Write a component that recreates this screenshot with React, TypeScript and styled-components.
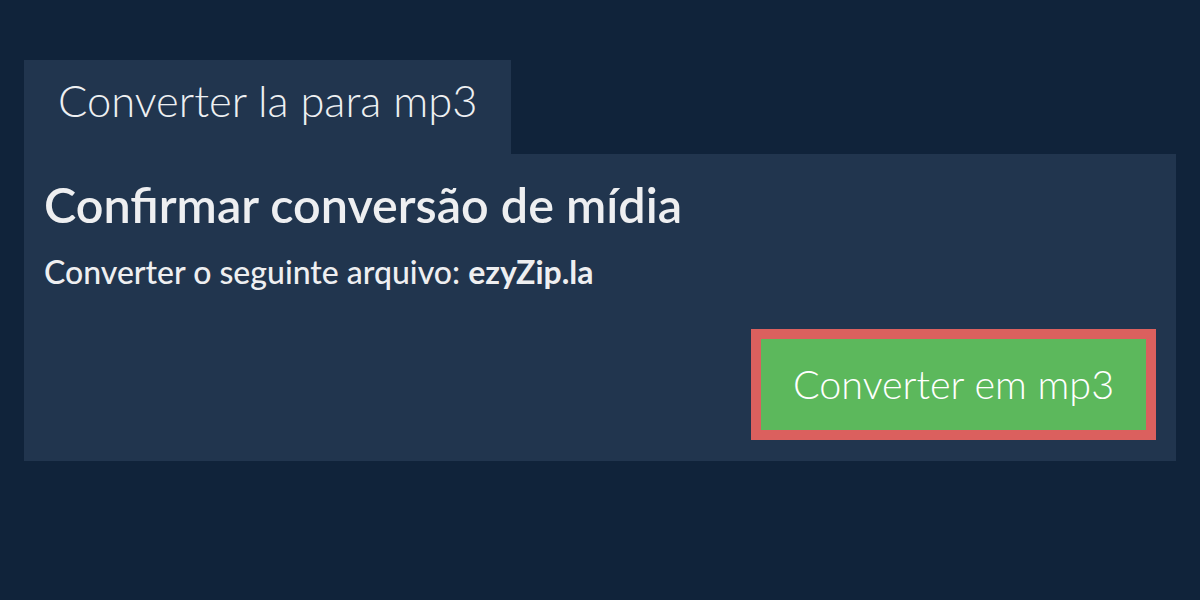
import React from "react"
import styled, { createGlobalStyle } from "styled-components"

const GlobalStyle = createGlobalStyle`
    html, body {
        margin: 0;
        padding: 0;
        background-color: #10233a;
        font-family: Lato, "Open Sans", sans-serif;
    }
`
const Page = styled.div`
    width: 1200px;
    height: 600px;
    padding: 60px 24px 0 24px;
    box-sizing: border-box;
    display: flex;
    flex-direction: column;
    align-items: flex-start;
`
const Tab = styled.div`
    height: 94px;
    box-sizing: border-box;
    padding: 14px 34px 0 34px;
    background-color: #21354e;
    color: #eef0f2;
    font-size: 43.5px;
    font-weight: 300;
    line-height: 1.2;
`
const Panel = styled.div`
    align-self: stretch;
    background-color: #21354e;
    padding: 21px 20px 21px 20px;
    display: flex;
    flex-direction: column;
`
const Title = styled.h1`
    margin: 0;
    font-size: 48.5px;
    font-weight: 600;
    line-height: 1.2;
    color: #eeeff1;
`
const FileLine = styled.p`
    margin: 20px 0 0 0;
    font-size: 32px;
    font-weight: 500;
    line-height: 1.2;
    color: #eeeff1;
    b {
        font-weight: 700;
    }
`
const Actions = styled.div`
    display: flex;
    justify-content: flex-end;
    margin-top: 37px;
`
const ConvertButton = styled.button`
    width: 405px;
    height: 111px;
    box-sizing: border-box;
    padding: 0;
    border: 10px solid #db605e;
    background-color: #5cb85c;
    color: #ffffff;
    font-family: Lato, "Open Sans", sans-serif;
    font-size: 39.5px;
    font-weight: 300;
    line-height: 1.2;
    cursor: pointer;
`

export default function App() {
    return (
        <>
            <GlobalStyle />
            <Page>
                <Tab>Converter la para mp3</Tab>
                <Panel>
                    <Title>Confirmar conversão de mídia</Title>
                    <FileLine>Converter o seguinte arquivo: <b>ezyZip.la</b></FileLine>
                    <Actions>
                        <ConvertButton>Converter em mp3</ConvertButton>
                    </Actions>
                </Panel>
            </Page>
        </>
    )
}
